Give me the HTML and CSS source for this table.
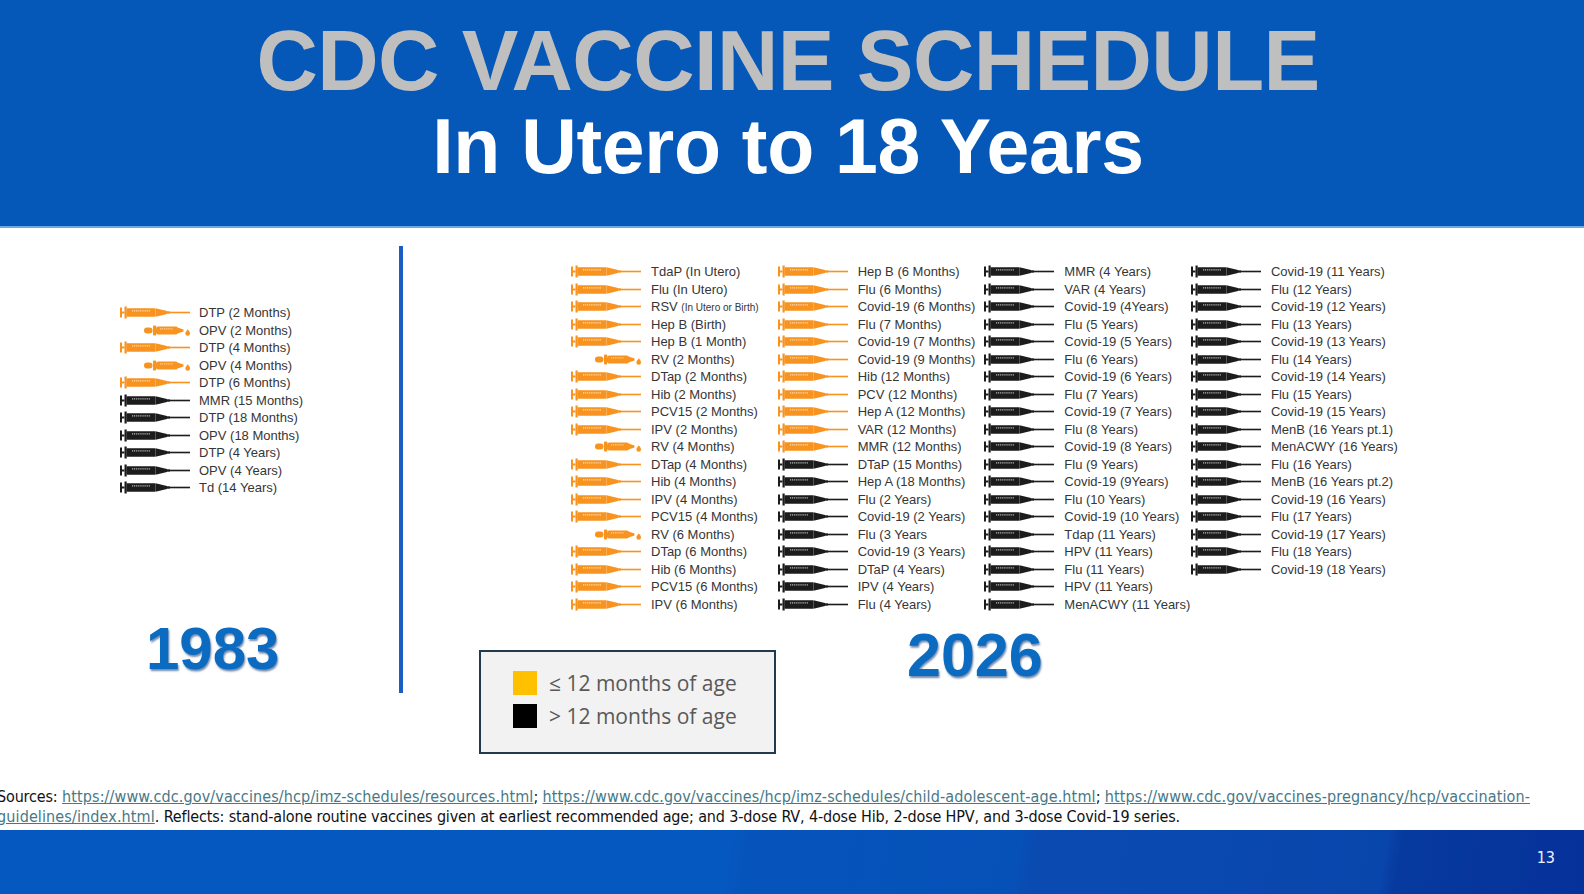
FILE: index.html
```html
<!DOCTYPE html>
<html lang="en">
<head>
<meta charset="utf-8">
<title>CDC Vaccine Schedule</title>
<link rel="stylesheet" href="styles.css">
</head>
<body>
<svg class="defs" aria-hidden="true">
  <symbol id="syr" viewBox="0 0 70 13">
    <rect x="0" y="1.5" width="2" height="10"/>
    <rect x="2" y="5.5" width="2.5" height="2"/>
    <rect x="4.5" y="0.5" width="2.2" height="12"/>
    <rect x="6.5" y="2.3" width="29" height="8.4" rx="0.8"/>
    <path d="M35.5 2.3 L47 5 L47 8 L35.5 10.7 Z"/>
    <rect x="47" y="5.3" width="3" height="2.4"/>
    <rect x="50" y="5.7" width="20" height="1.6"/>
    <line x1="12" y1="4.9" x2="30" y2="4.9" stroke="#fff" stroke-opacity=".7" stroke-width="1.1" stroke-dasharray="1.1 .8"/>
  </symbol>
  <symbol id="drp" viewBox="0 0 70 13">
    <rect x="24" y="3.5" width="8.5" height="6" rx="3"/>
    <rect x="33" y="1.5" width="3.2" height="10" rx="1"/>
    <rect x="36" y="2.5" width="22" height="8" rx="2.2"/>
    <path d="M57.5 3.5 L63.5 5.6 L63.5 7.4 L57.5 9.5 Z"/>
    <path d="M67.8 5.2 C69.6 7.4 70 8.4 70 9.5 A2.3 2.3 0 0 1 65.4 9.5 C65.4 8.4 66 7.4 67.8 5.2 Z"/>
    <line x1="40" y1="4.9" x2="53" y2="4.9" stroke="#fff" stroke-opacity=".6" stroke-width="1.1" stroke-dasharray="1.1 .8"/>
  </symbol>
</svg>

<header class="hero">
  <h1 class="t1">CDC VACCINE SCHEDULE</h1>
  <h2 class="t2">In Utero to 18 Years</h2>
</header>

<main class="main">
  <section class="old">
    <ul class="list">
      <li class="row o"><svg class="ic"><use href="#syr"/></svg><span>DTP (2 Months)</span></li>
      <li class="row o"><svg class="ic"><use href="#drp"/></svg><span>OPV (2 Months)</span></li>
      <li class="row o"><svg class="ic"><use href="#syr"/></svg><span>DTP (4 Months)</span></li>
      <li class="row o"><svg class="ic"><use href="#drp"/></svg><span>OPV (4 Months)</span></li>
      <li class="row o"><svg class="ic"><use href="#syr"/></svg><span>DTP (6 Months)</span></li>
      <li class="row k"><svg class="ic"><use href="#syr"/></svg><span>MMR (15 Months)</span></li>
      <li class="row k"><svg class="ic"><use href="#syr"/></svg><span>DTP (18 Months)</span></li>
      <li class="row k"><svg class="ic"><use href="#syr"/></svg><span>OPV (18 Months)</span></li>
      <li class="row k"><svg class="ic"><use href="#syr"/></svg><span>DTP (4 Years)</span></li>
      <li class="row k"><svg class="ic"><use href="#syr"/></svg><span>OPV (4 Years)</span></li>
      <li class="row k"><svg class="ic"><use href="#syr"/></svg><span>Td (14 Years)</span></li>
    </ul>
    <div class="year">1983</div>
  </section>

  <div class="divider"></div>

  <section class="new">
    <div class="grid">
      <ul class="list">
        <li class="row o"><svg class="ic"><use href="#syr"/></svg><span>TdaP (In Utero)</span></li>
        <li class="row o"><svg class="ic"><use href="#syr"/></svg><span>Flu (In Utero)</span></li>
        <li class="row o"><svg class="ic"><use href="#syr"/></svg><span>RSV <span class="small">(In Utero or Birth)</span></span></li>
        <li class="row o"><svg class="ic"><use href="#syr"/></svg><span>Hep B (Birth)</span></li>
        <li class="row o"><svg class="ic"><use href="#syr"/></svg><span>Hep B (1 Month)</span></li>
        <li class="row o"><svg class="ic"><use href="#drp"/></svg><span>RV (2 Months)</span></li>
        <li class="row o"><svg class="ic"><use href="#syr"/></svg><span>DTap (2 Months)</span></li>
        <li class="row o"><svg class="ic"><use href="#syr"/></svg><span>Hib (2 Months)</span></li>
        <li class="row o"><svg class="ic"><use href="#syr"/></svg><span>PCV15 (2 Months)</span></li>
        <li class="row o"><svg class="ic"><use href="#syr"/></svg><span>IPV (2 Months)</span></li>
        <li class="row o"><svg class="ic"><use href="#drp"/></svg><span>RV (4 Months)</span></li>
        <li class="row o"><svg class="ic"><use href="#syr"/></svg><span>DTap (4 Months)</span></li>
        <li class="row o"><svg class="ic"><use href="#syr"/></svg><span>Hib (4 Months)</span></li>
        <li class="row o"><svg class="ic"><use href="#syr"/></svg><span>IPV (4 Months)</span></li>
        <li class="row o"><svg class="ic"><use href="#syr"/></svg><span>PCV15 (4 Months)</span></li>
        <li class="row o"><svg class="ic"><use href="#drp"/></svg><span>RV (6 Months)</span></li>
        <li class="row o"><svg class="ic"><use href="#syr"/></svg><span>DTap (6 Months)</span></li>
        <li class="row o"><svg class="ic"><use href="#syr"/></svg><span>Hib (6 Months)</span></li>
        <li class="row o"><svg class="ic"><use href="#syr"/></svg><span>PCV15 (6 Months)</span></li>
        <li class="row o"><svg class="ic"><use href="#syr"/></svg><span>IPV (6 Months)</span></li>
      </ul>
      <ul class="list">
        <li class="row o"><svg class="ic"><use href="#syr"/></svg><span>Hep B (6 Months)</span></li>
        <li class="row o"><svg class="ic"><use href="#syr"/></svg><span>Flu (6 Months)</span></li>
        <li class="row o"><svg class="ic"><use href="#syr"/></svg><span>Covid-19 (6 Months)</span></li>
        <li class="row o"><svg class="ic"><use href="#syr"/></svg><span>Flu (7 Months)</span></li>
        <li class="row o"><svg class="ic"><use href="#syr"/></svg><span>Covid-19 (7 Months)</span></li>
        <li class="row o"><svg class="ic"><use href="#syr"/></svg><span>Covid-19 (9 Months)</span></li>
        <li class="row o"><svg class="ic"><use href="#syr"/></svg><span>Hib (12 Months)</span></li>
        <li class="row o"><svg class="ic"><use href="#syr"/></svg><span>PCV (12 Months)</span></li>
        <li class="row o"><svg class="ic"><use href="#syr"/></svg><span>Hep A (12 Months)</span></li>
        <li class="row o"><svg class="ic"><use href="#syr"/></svg><span>VAR (12 Months)</span></li>
        <li class="row o"><svg class="ic"><use href="#syr"/></svg><span>MMR (12 Months)</span></li>
        <li class="row k"><svg class="ic"><use href="#syr"/></svg><span>DTaP (15 Months)</span></li>
        <li class="row k"><svg class="ic"><use href="#syr"/></svg><span>Hep A (18 Months)</span></li>
        <li class="row k"><svg class="ic"><use href="#syr"/></svg><span>Flu (2 Years)</span></li>
        <li class="row k"><svg class="ic"><use href="#syr"/></svg><span>Covid-19 (2 Years)</span></li>
        <li class="row k"><svg class="ic"><use href="#syr"/></svg><span>Flu (3 Years</span></li>
        <li class="row k"><svg class="ic"><use href="#syr"/></svg><span>Covid-19 (3 Years)</span></li>
        <li class="row k"><svg class="ic"><use href="#syr"/></svg><span>DTaP (4 Years)</span></li>
        <li class="row k"><svg class="ic"><use href="#syr"/></svg><span>IPV (4 Years)</span></li>
        <li class="row k"><svg class="ic"><use href="#syr"/></svg><span>Flu (4 Years)</span></li>
      </ul>
      <ul class="list">
        <li class="row k"><svg class="ic"><use href="#syr"/></svg><span>MMR (4 Years)</span></li>
        <li class="row k"><svg class="ic"><use href="#syr"/></svg><span>VAR (4 Years)</span></li>
        <li class="row k"><svg class="ic"><use href="#syr"/></svg><span>Covid-19 (4Years)</span></li>
        <li class="row k"><svg class="ic"><use href="#syr"/></svg><span>Flu (5 Years)</span></li>
        <li class="row k"><svg class="ic"><use href="#syr"/></svg><span>Covid-19 (5 Years)</span></li>
        <li class="row k"><svg class="ic"><use href="#syr"/></svg><span>Flu (6 Years)</span></li>
        <li class="row k"><svg class="ic"><use href="#syr"/></svg><span>Covid-19 (6 Years)</span></li>
        <li class="row k"><svg class="ic"><use href="#syr"/></svg><span>Flu (7 Years)</span></li>
        <li class="row k"><svg class="ic"><use href="#syr"/></svg><span>Covid-19 (7 Years)</span></li>
        <li class="row k"><svg class="ic"><use href="#syr"/></svg><span>Flu (8 Years)</span></li>
        <li class="row k"><svg class="ic"><use href="#syr"/></svg><span>Covid-19 (8 Years)</span></li>
        <li class="row k"><svg class="ic"><use href="#syr"/></svg><span>Flu (9 Years)</span></li>
        <li class="row k"><svg class="ic"><use href="#syr"/></svg><span>Covid-19 (9Years)</span></li>
        <li class="row k"><svg class="ic"><use href="#syr"/></svg><span>Flu (10 Years)</span></li>
        <li class="row k"><svg class="ic"><use href="#syr"/></svg><span>Covid-19 (10 Years)</span></li>
        <li class="row k"><svg class="ic"><use href="#syr"/></svg><span>Tdap (11 Years)</span></li>
        <li class="row k"><svg class="ic"><use href="#syr"/></svg><span>HPV (11 Years)</span></li>
        <li class="row k"><svg class="ic"><use href="#syr"/></svg><span>Flu (11 Years)</span></li>
        <li class="row k"><svg class="ic"><use href="#syr"/></svg><span>HPV (11 Years)</span></li>
        <li class="row k"><svg class="ic"><use href="#syr"/></svg><span>MenACWY (11 Years)</span></li>
      </ul>
      <ul class="list">
        <li class="row k"><svg class="ic"><use href="#syr"/></svg><span>Covid-19 (11 Years)</span></li>
        <li class="row k"><svg class="ic"><use href="#syr"/></svg><span>Flu (12 Years)</span></li>
        <li class="row k"><svg class="ic"><use href="#syr"/></svg><span>Covid-19 (12 Years)</span></li>
        <li class="row k"><svg class="ic"><use href="#syr"/></svg><span>Flu (13 Years)</span></li>
        <li class="row k"><svg class="ic"><use href="#syr"/></svg><span>Covid-19 (13 Years)</span></li>
        <li class="row k"><svg class="ic"><use href="#syr"/></svg><span>Flu (14 Years)</span></li>
        <li class="row k"><svg class="ic"><use href="#syr"/></svg><span>Covid-19 (14 Years)</span></li>
        <li class="row k"><svg class="ic"><use href="#syr"/></svg><span>Flu (15 Years)</span></li>
        <li class="row k"><svg class="ic"><use href="#syr"/></svg><span>Covid-19 (15 Years)</span></li>
        <li class="row k"><svg class="ic"><use href="#syr"/></svg><span>MenB (16 Years pt.1)</span></li>
        <li class="row k"><svg class="ic"><use href="#syr"/></svg><span>MenACWY (16 Years)</span></li>
        <li class="row k"><svg class="ic"><use href="#syr"/></svg><span>Flu (16 Years)</span></li>
        <li class="row k"><svg class="ic"><use href="#syr"/></svg><span>MenB (16 Years pt.2)</span></li>
        <li class="row k"><svg class="ic"><use href="#syr"/></svg><span>Covid-19 (16 Years)</span></li>
        <li class="row k"><svg class="ic"><use href="#syr"/></svg><span>Flu (17 Years)</span></li>
        <li class="row k"><svg class="ic"><use href="#syr"/></svg><span>Covid-19 (17 Years)</span></li>
        <li class="row k"><svg class="ic"><use href="#syr"/></svg><span>Flu (18 Years)</span></li>
        <li class="row k"><svg class="ic"><use href="#syr"/></svg><span>Covid-19 (18 Years)</span></li>
      </ul>
    </div>
    <div class="bottom">
      <div class="legend">
        <div class="key"><span class="sw y"></span><span>≤ 12 months of age</span></div>
        <div class="key"><span class="sw b"></span><span>&gt; 12 months of age</span></div>
      </div>
      <div class="year">2026</div>
    </div>
  </section>
</main>

<div class="src">
  <div class="line">Sources: <a href="#">https://www.cdc.gov/vaccines/hcp/imz-schedules/resources.html</a>; <a href="#">https://www.cdc.gov/vaccines/hcp/imz-schedules/child-adolescent-age.html</a>; <a href="#">https://www.cdc.gov/vaccines-pregnancy/hcp/vaccination-</a></div>
  <div class="line"><a href="#">guidelines/index.html</a>. Reflects: stand-alone routine vaccines given at earliest recommended age; and 3-dose RV, 4-dose Hib, 2-dose HPV, and 3-dose Covid-19 series.</div>
</div>

<footer class="bar"><span class="num">13</span></footer>
</body>
</html>
```

FILE: styles.css
```css
* { box-sizing: border-box; margin: 0; padding: 0; }

html, body {
  width: 1584px;
  height: 894px;
  overflow: hidden;
}

body {
  font-family: "Liberation Sans", Arial, sans-serif;
  background: #ffffff;
}

.defs {
  position: absolute;
  width: 0;
  height: 0;
  overflow: hidden;
}

/* Header */
.hero {
  height: 228px;
  background: #0558b7;
  border-bottom: 2px solid #6fa8e6;
  padding-top: 18px;
  padding-right: 8px;
  text-align: center;
}

.t1 {
  font-size: 85px;
  line-height: 85px;
  font-weight: 700;
  color: #bfbfbf;
  letter-spacing: -0.6px;
}

.t2 {
  margin-top: 5px;
  font-size: 77px;
  line-height: 77px;
  font-weight: 700;
  color: #ffffff;
  letter-spacing: -0.3px;
}

/* Main area */
.main {
  display: flex;
  height: 559px;
}

.old {
  width: 399px;
  flex: none;
  padding: 76px 0 0 120px;
}

.list { list-style: none; }

.row {
  display: flex;
  align-items: center;
  height: 17.5px;
  font-size: 13px;
  color: #363636;
  white-space: nowrap;
}

.ic {
  width: 70px;
  height: 13px;
  flex: none;
  margin-right: 9px;
  fill: currentColor;
}

.o .ic { color: #f7931e; }
.k .ic { color: #1c1c1c; }

.small { font-size: 10px; }

.year {
  font-size: 60px;
  line-height: 60px;
  font-weight: 700;
  color: #0a6bc0;
  text-shadow: 1px 2px 2px rgba(0, 45, 110, 0.55);
}

.old .year {
  margin: 122px 0 0 26px;
}

.divider {
  width: 4px;
  flex: none;
  height: 447px;
  margin-top: 18px;
  background: #1a5ec4;
}

.new {
  flex: 1;
  padding-top: 35px;
}

.grid {
  display: grid;
  grid-template-columns: repeat(4, 206.67px);
  margin-left: 168px;
}

.new .ic { margin-right: 10px; }

.bottom {
  display: flex;
  align-items: flex-start;
}

.legend {
  margin: 37px 0 0 76px;
  width: 297px;
  height: 104px;
  border: 2px solid #213a4e;
  background: #f2f2f2;
  padding: 19px 0 0 32px;
  display: flex;
  flex-direction: column;
  gap: 9px;
  font-family: "Open Sans", "Liberation Sans", sans-serif;
  font-size: 21px;
  color: #595959;
}

.key {
  display: flex;
  align-items: center;
  gap: 12px;
  height: 24px;
}

.sw { width: 24px; height: 24px; flex: none; }
.sw.y { background: #ffc000; }
.sw.b { background: #000000; }

.new .year {
  margin: 12px 0 0 131px;
  font-size: 61px;
  line-height: 61px;
}

/* Sources */
.src {
  font-family: "DejaVu Sans Condensed", "DejaVu Sans", sans-serif;
  font-stretch: condensed;
  font-size: 16px;
  line-height: 20px;
  letter-spacing: -0.15px;
  color: #111111;
  margin-left: -3px;
  white-space: nowrap;
}

.src a {
  color: #467886;
  text-decoration: underline;
  letter-spacing: 0.12px;
}

/* Footer bar */
.bar {
  margin-top: 3px;
  height: 64px;
  background: linear-gradient(100deg, #0558c0 0%, #0558c0 46%, #0554bc 47%, #0651b8 64%, #0a4bb2 65%, #0946ac 87%, #073a9e 88%, #05319a 100%);
  display: flex;
  justify-content: flex-end;
  align-items: flex-start;
  padding: 18px 29px 0 0;
}

.num {
  font-family: "DejaVu Sans Condensed", "DejaVu Sans", sans-serif;
  font-stretch: condensed;
  font-size: 16px;
  color: #eef3fb;
}
```
